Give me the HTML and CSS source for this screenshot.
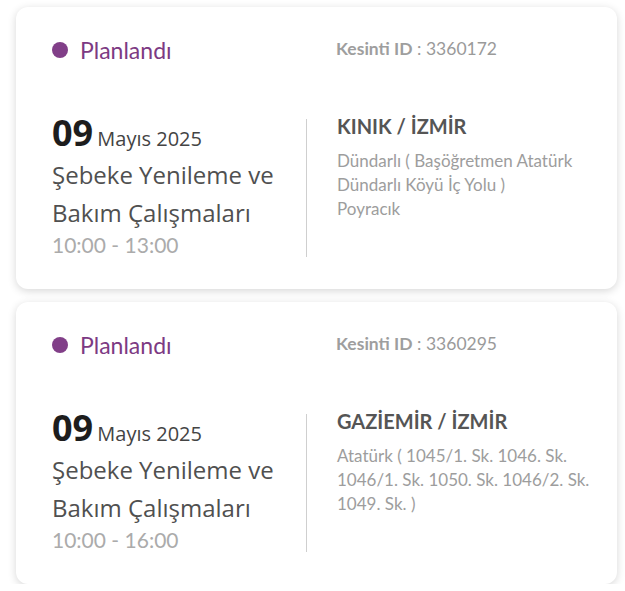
FILE: index.html
```html
<!DOCTYPE html>
<html lang="tr">
<head>
<meta charset="utf-8">
<title>Kesintiler</title>
<link rel="stylesheet" href="styles.css">
</head>
<body>
<div class="list">
  <div class="card">
    <div class="status"><span class="dot"></span><span class="status-text">Planlandı</span></div>
    <div class="id"><b>Kesinti ID</b> : 3360172</div>
    <div class="when">
      <div class="date"><span class="day">09</span> <span class="month">Mayıs 2025</span></div>
      <div class="title">Şebeke Yenileme ve Bakım Çalışmaları</div>
      <div class="time">10:00 - 13:00</div>
    </div>
    <div class="where">
      <div class="place">KINIK / İZMİR</div>
      <div class="addr">Dündarlı ( Başöğretmen Atatürk Dündarlı Köyü İç Yolu )</div>
      <div class="addr">Poyracık</div>
    </div>
  </div>
  <div class="card">
    <div class="status"><span class="dot"></span><span class="status-text">Planlandı</span></div>
    <div class="id"><b>Kesinti ID</b> : 3360295</div>
    <div class="when">
      <div class="date"><span class="day">09</span> <span class="month">Mayıs 2025</span></div>
      <div class="title">Şebeke Yenileme ve Bakım Çalışmaları</div>
      <div class="time">10:00 - 16:00</div>
    </div>
    <div class="where">
      <div class="place">GAZİEMİR / İZMİR</div>
      <div class="addr">Atatürk ( 1045/1. Sk. 1046. Sk. 1046/1. Sk. 1050. Sk. 1046/2. Sk. 1049. Sk. )</div>
    </div>
  </div>
</div>
</body>
</html>
```
FILE: styles.css
```css
html, body {
  margin: 0;
  padding: 0;
  background: #ffffff;
}
body {
  font-family: "Lato", "Noto Sans", sans-serif;
}
.list {
  display: flex;
  flex-direction: column;
  gap: 13px;
  padding: 7px 8px 0 16px;
}
.card {
  background: #fff;
  border-radius: 12px;
  box-shadow: 0 2px 9px rgba(0, 0, 0, 0.16);
  height: 282px;
  box-sizing: border-box;
  padding: 30px 0 0 36px;
  display: grid;
  grid-template-columns: 254px 1fr;
  grid-template-rows: 52px auto;
  align-items: start;
}
.status {
  display: flex;
  align-items: center;
  gap: 12px;
}
.dot {
  width: 16px;
  height: 16px;
  border-radius: 50%;
  background: #813f88;
}
.status-text {
  font-size: 23px;
  color: #7d3a83;
  line-height: 26px;
}
.id {
  padding-left: 30px;
  font-size: 17.5px;
  color: #9a9a9a;
  line-height: 22px;
  padding-top: 1px;
}
.id b {
  font-weight: 700;
  color: #9e9e9e;
}
.when {
  font-family: "Open Sans", "Noto Sans", sans-serif;
  margin-top: 28px;
}
.date {
  color: #333;
  line-height: 31px;
}
.day {
  font-size: 36px;
  font-weight: 700;
  color: #1d1d1d;
}
.month {
  font-size: 20px;
  color: #444;
}
.title {
  font-size: 24px;
  line-height: 38px;
  color: #505050;
  padding-right: 4px;
}
.time {
  font-family: "Lato", "Noto Sans", sans-serif;
  font-size: 21px;
  color: #ababab;
  line-height: 26px;
}
.where {
  margin-top: 30px;
  border-left: 1px solid #cfcfcf;
  padding-left: 30px;
  padding-right: 18px;
  min-height: 138px;
  box-sizing: border-box;
}
.place {
  font-size: 20px;
  font-weight: 700;
  color: #555;
  line-height: 26px;
  margin-top: -6px;
  margin-bottom: 10px;
}
.addr {
  font-size: 17px;
  color: #9d9d9d;
  line-height: 24px;
}
```
